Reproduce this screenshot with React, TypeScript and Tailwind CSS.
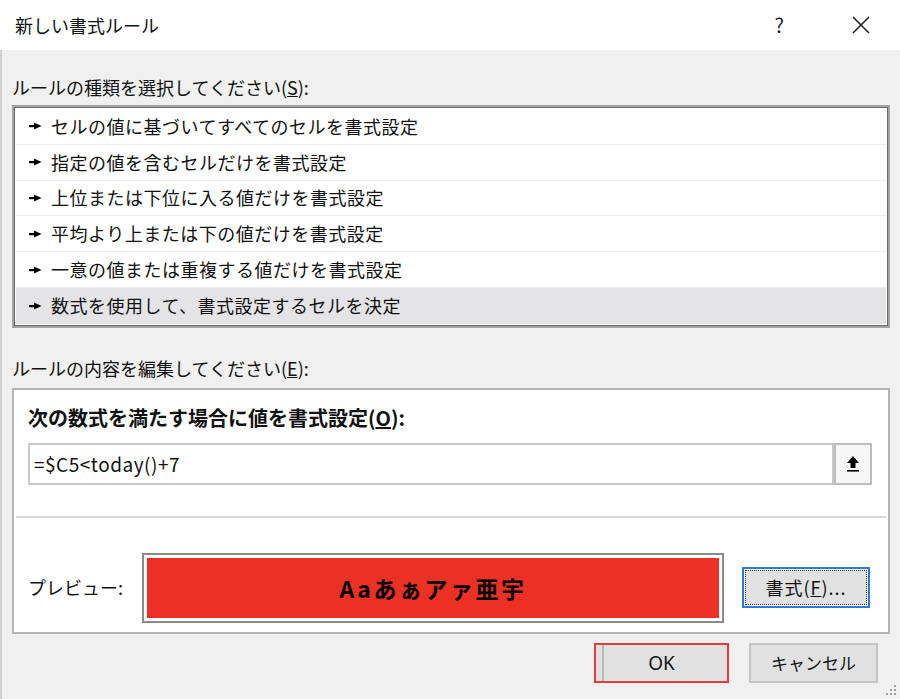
import React from "react";

const font = { fontFamily: '"Noto Sans CJK JP", "Noto Sans", sans-serif' };

const rules = [
  "セルの値に基づいてすべてのセルを書式設定",
  "指定の値を含むセルだけを書式設定",
  "上位または下位に入る値だけを書式設定",
  "平均より上または下の値だけを書式設定",
  "一意の値または重複する値だけを書式設定",
  "数式を使用して、書式設定するセルを決定",
];

const Bullet = () => (
  <svg width="13" height="10" viewBox="0 0 13 10" className="shrink-0">
    <rect x="0" y="4" width="7" height="2.2" fill="#000" />
    <polygon points="5,1.5 12.5,5 5,8.5" fill="#000" />
  </svg>
);

export default function App() {
  return (
    <div className="w-[900px] h-[699px] flex flex-col text-[#111] overflow-hidden relative" style={font}>
      {/* title bar */}
      <div className="h-[50px] bg-white flex items-center pl-[15px] shrink-0">
        <span className="text-[18px] leading-none">新しい書式ルール</span>
        <span className="ml-auto text-[20px] mr-[68px] text-[#222]">?</span>
        <svg width="18" height="18" viewBox="0 0 18 18" className="mr-[30px]">
          <path d="M1 1 L17 17 M17 1 L1 17" stroke="#222" strokeWidth="1.6" />
        </svg>
      </div>

      {/* body */}
      <div className="flex-1 bg-[#f0f0f0] border-l-[2px] border-[#cfcfcf] flex flex-col pl-[10px] pr-[10px]">
        <div className="mt-[25px] h-[24px] text-[18px] leading-[24px]">
          ルールの種類を選択してください(<span className="underline">S</span>):
        </div>
        <div className="mt-[6px] w-[878px] border-2 border-[#a3a3a3] bg-white">
          <div className="border border-[#6b6b6b] py-[1px] px-[1px]">
            {rules.map((r, i) => (
              <div
                key={r}
                className={`h-[35.8px] flex items-center gap-[9px] pl-[13px] text-[18px] tracking-[0.5px] ${
                  i === 5 ? "bg-[#e4e4e7]" : "border-b border-[#ececec]"
                }`}
              >
                <Bullet />
                <span>{r}</span>
              </div>
            ))}
          </div>
        </div>

        <div className="mt-[28px] h-[24px] text-[18px] leading-[24px]">
          ルールの内容を編集してください(<span className="underline">E</span>):
        </div>
        <div className="mt-[8px] w-[878px] h-[246px] bg-white border-2 border-[#b4b4b4] flex flex-col">
          <div className="pl-[14px] pr-[16px]">
            <div className="mt-[16px] h-[24px] text-[20px] font-bold leading-[24px]">
              次の数式を満たす場合に値を書式設定(<span className="underline">O</span>):
            </div>
            <div className="mt-[13px] h-[42px] flex">
              <div className="flex-1 border-2 border-[#c9c9c9] flex items-center pl-[4px] text-[19px] tracking-[0.5px]">
                =$C5&lt;today()+7
              </div>
              <div className="w-[38px] border-2 border-[#bdbdbd] bg-[#f7f7f7] flex items-center justify-center">
                <svg width="16" height="18" viewBox="0 0 16 18">
                  <path d="M8 1 L14 8 L10.5 8 L10.5 13 L5.5 13 L5.5 8 L2 8 Z" fill="#000" />
                  <rect x="2" y="15" width="12" height="1.6" fill="#000" />
                </svg>
              </div>
            </div>
          </div>
          <div className="mt-[31px] mx-[2px] h-[2px] bg-[#d9d9d9]" />
          <div className="mt-[35px] flex items-center pl-[14px]">
            <span className="w-[114px] text-[18px]">プレビュー:</span>
            <div className="w-[582px] h-[70px] border-2 border-[#8a8a8a] p-[3px] bg-white">
              <div className="w-full h-full bg-[#ea3124] flex items-center justify-center text-[23px] tracking-[2.5px] font-bold text-black">
                Aaあぁアァ亜宇
              </div>
            </div>
            <div className="ml-[18px] w-[128px] h-[41px] border-2 border-[#2f7ad6] p-[1px]">
              <div className="w-full h-full border border-dotted border-[#333] bg-[#e1e1e1] flex items-center justify-center text-[18px] tracking-[1px]">
                書式(<span className="underline">F</span>)...
              </div>
            </div>
          </div>
        </div>

        <div className="mt-[9px] flex justify-end gap-[20px] pr-[12px]">
          <div className="w-[135px] h-[40px] border-2 border-[#e8393b] bg-[#e1e1e1] flex">
            <div className="w-[2px] bg-[#b9b9b9] ml-[6px]" />
            <div className="flex-1 flex items-center justify-center text-[19px] pr-[8px]" style={{ fontFamily: '"Noto Sans", sans-serif' }}>
              OK
            </div>
          </div>
          <div className="w-[129px] h-[40px] border-2 border-[#c4c4c4] bg-[#e1e1e1] flex items-center justify-center text-[17px]">
            キャンセル
          </div>
        </div>
      </div>

      {/* resize grip */}
      <svg width="12" height="12" viewBox="0 0 12 12" className="absolute right-[3px] bottom-[3px]">
        {[
          [9, 1],
          [9, 5],
          [5, 5],
          [9, 9],
          [5, 9],
          [1, 9],
        ].map(([x, y]) => (
          <rect key={`${x}-${y}`} x={x} y={y} width="2" height="2" fill="#a0a0a0" />
        ))}
      </svg>
    </div>
  );
}
